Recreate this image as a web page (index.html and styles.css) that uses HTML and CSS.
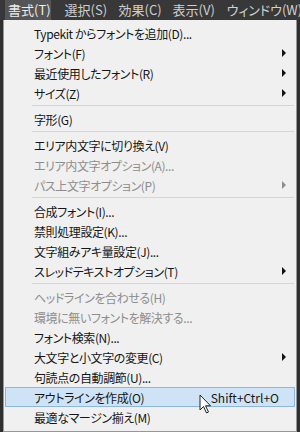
FILE: index.html
```html
<!DOCTYPE html>
<html lang="ja">
<head>
  <meta charset="UTF-8">
  <title>書式メニュー</title>
  <link rel="stylesheet" href="styles.css">
</head>
<body>
  <ul class="menubar">
    <li class="open">書式(T)</li>
    <li>選択(S)</li>
    <li>効果(C)</li>
    <li>表示(V)</li>
    <li>ウィンドウ(W)</li>
  </ul>

  <ul class="menu">
    <li><span>Typekit からフォントを追加(D)...</span></li>
    <li class="sub"><span>フォント(F)</span></li>
    <li class="sub"><span>最近使用したフォント(R)</span></li>
    <li class="sub"><span>サイズ(Z)</span></li>
    <li class="sep"></li>
    <li><span>字形(G)</span></li>
    <li class="sep"></li>
    <li><span>エリア内文字に切り換え(V)</span></li>
    <li class="off"><span>エリア内文字オプション(A)...</span></li>
    <li class="off sub"><span>パス上文字オプション(P)</span></li>
    <li class="sep"></li>
    <li><span>合成フォント(I)...</span></li>
    <li><span>禁則処理設定(K)...</span></li>
    <li><span>文字組みアキ量設定(J)...</span></li>
    <li class="sub"><span>スレッドテキストオプション(T)</span></li>
    <li class="sep"></li>
    <li class="off"><span>ヘッドラインを合わせる(H)</span></li>
    <li class="off"><span>環境に無いフォントを解決する...</span></li>
    <li><span>フォント検索(N)...</span></li>
    <li class="sub"><span>大文字と小文字の変更(C)</span></li>
    <li><span>句読点の自動調節(U)...</span></li>
    <li class="hover">
      <span>アウトラインを作成(O)</span>
      <span class="key">Shift+Ctrl+O</span>
      <svg class="cursor" width="13" height="20" viewBox="0 0 13 20">
        <path d="M1 1 L1 16 L4.5 12.5 L7.5 19 L9.5 18 L6.5 11.8 L11.5 11.8 Z" fill="#fff" stroke="#222" stroke-width="1" stroke-linejoin="round"/>
      </svg>
    </li>
    <li><span>最適なマージン揃え(M)</span></li>
  </ul>
</body>
</html>
```

FILE: styles.css
```css
* {
  margin: 0;
  padding: 0;
  list-style-type: none;
  box-sizing: border-box;
}

html {
  font-family: "Noto Sans CJK JP", "Noto Sans", sans-serif;
  font-feature-settings: "palt";
}

body {
  background-color: #2f2f2f;
  width: 300px;
  height: 432px;
  overflow: hidden;
}

.menubar {
  display: flex;
  height: 20px;
  background-color: #383838;
  color: #d0d0d0;
  font-size: 13px;
  line-height: 20px;
  padding-left: 5px;
  white-space: nowrap;
  overflow: hidden;
}

.menubar li {
  flex: 0 0 54px;
  padding-left: 3px;
}

.menubar li.open {
  flex-basis: 43px;
  margin-right: 11px;
  background-color: #555;
  color: #eee;
}

.menu {
  width: 294px;
  height: 412px;
  margin-left: 3px;
  background-color: #f0f0f0;
  border: 1px solid #979797;
  border-top: none;
  padding: 3px 1px;
  font-size: 12px;
  letter-spacing: -0.4px;
  color: #151515;
}

.menu li {
  display: flex;
  align-items: center;
  height: 20px;
  padding-left: 29px;
  position: relative;
  white-space: nowrap;
}

.menu li.off {
  color: #8d8d8d;
}

.menu li.sub::after {
  content: "";
  position: absolute;
  right: 9px;
  top: 6px;
  border-top: 4px solid transparent;
  border-bottom: 4px solid transparent;
  border-left: 4px solid #111;
}

.menu li.off.sub::after {
  border-left-color: #8d8d8d;
}

.menu li.sep {
  height: 6px;
  margin-left: 27px;
  margin-right: 1px;
  padding: 0;
  border-top: 2px solid #f0f0f0;
  border-bottom: 3px solid #f0f0f0;
  background-color: #d5d5d5;
}

.menu li.hover {
  background-color: #cfe3f6;
  outline: 1px solid #8ab8e6;
  outline-offset: -1px;
}

.menu .key {
  margin-left: auto;
  margin-right: 16px;
  letter-spacing: 0;
}

.menu .cursor {
  position: absolute;
  left: 194px;
  top: 7px;
}
```
